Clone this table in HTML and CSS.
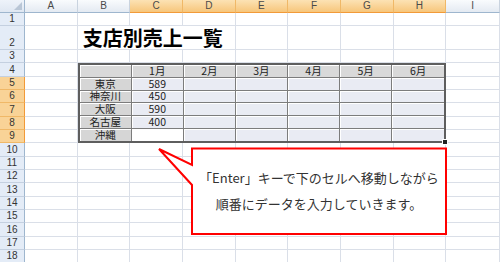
FILE: index.html
```html
<!DOCTYPE html>
<html lang="ja">
<head>
<meta charset="utf-8">
<title>支店別売上一覧</title>
<link rel="stylesheet" href="styles.css">
</head>
<body>
<div class="app">
  <div class="sheet">
    <div class="corner"></div>
    <div class="ch">A</div><div class="ch">B</div><div class="ch sel">C</div><div class="ch sel">D</div><div class="ch sel">E</div><div class="ch sel">F</div><div class="ch sel">G</div><div class="ch sel">H</div><div class="ch">I</div>

    <div class="rh">1</div><div class="c"></div><div class="c"></div><div class="c"></div><div class="c"></div><div class="c"></div><div class="c"></div><div class="c"></div><div class="c"></div><div class="c"></div>

    <div class="rh">2</div><div class="c"></div><div class="c title-cell"><span class="title">支店別売上一覧</span></div><div class="c"></div><div class="c"></div><div class="c"></div><div class="c"></div><div class="c"></div>

    <div class="rh">3</div><div class="c"></div><div class="c"></div><div class="c"></div><div class="c"></div><div class="c"></div><div class="c"></div><div class="c"></div><div class="c"></div><div class="c"></div>

    <div class="rh">4</div><div class="c"></div><div class="c"></div>
    <div class="rh sel">5</div><div class="c"></div><div class="c"></div>
    <div class="rh sel">6</div><div class="c"></div><div class="c"></div>
    <div class="rh sel">7</div><div class="c"></div><div class="c"></div>
    <div class="rh sel">8</div><div class="c"></div><div class="c"></div>
    <div class="rh sel">9</div><div class="c"></div><div class="c"></div>

    <div class="table">
      <div class="tc th"></div><div class="tc th">1月</div><div class="tc th">2月</div><div class="tc th">3月</div><div class="tc th">4月</div><div class="tc th">5月</div><div class="tc th last">6月</div>
      <div class="tc tn">東京</div><div class="tc td">589</div><div class="tc td"></div><div class="tc td"></div><div class="tc td"></div><div class="tc td"></div><div class="tc td last"></div>
      <div class="tc tn">神奈川</div><div class="tc td">450</div><div class="tc td"></div><div class="tc td"></div><div class="tc td"></div><div class="tc td"></div><div class="tc td last"></div>
      <div class="tc tn">大阪</div><div class="tc td">590</div><div class="tc td"></div><div class="tc td"></div><div class="tc td"></div><div class="tc td"></div><div class="tc td last"></div>
      <div class="tc tn">名古屋</div><div class="tc td">400</div><div class="tc td"></div><div class="tc td"></div><div class="tc td"></div><div class="tc td"></div><div class="tc td last"></div>
      <div class="tc tn bottom">沖縄</div><div class="tc td active bottom"></div><div class="tc td bottom"></div><div class="tc td bottom"></div><div class="tc td bottom"></div><div class="tc td bottom"></div><div class="tc td bottom last"></div>
      <div class="fill-handle"></div>
    </div>

    <div class="rh">10</div><div class="c"></div><div class="c"></div><div class="c"></div><div class="c"></div><div class="c"></div><div class="c"></div><div class="c"></div><div class="c"></div><div class="c"></div>
    <div class="rh">11</div><div class="c"></div><div class="c"></div><div class="c"></div><div class="c"></div><div class="c"></div><div class="c"></div><div class="c"></div><div class="c"></div><div class="c"></div>
    <div class="rh">12</div><div class="c"></div><div class="c"></div><div class="c"></div><div class="c"></div><div class="c"></div><div class="c"></div><div class="c"></div><div class="c"></div><div class="c"></div>
    <div class="rh">13</div><div class="c"></div><div class="c"></div><div class="c"></div><div class="c"></div><div class="c"></div><div class="c"></div><div class="c"></div><div class="c"></div><div class="c"></div>
    <div class="rh">14</div><div class="c"></div><div class="c"></div><div class="c"></div><div class="c"></div><div class="c"></div><div class="c"></div><div class="c"></div><div class="c"></div><div class="c"></div>
    <div class="rh">15</div><div class="c"></div><div class="c"></div><div class="c"></div><div class="c"></div><div class="c"></div><div class="c"></div><div class="c"></div><div class="c"></div><div class="c"></div>
    <div class="rh">16</div><div class="c"></div><div class="c"></div><div class="c"></div><div class="c"></div><div class="c"></div><div class="c"></div><div class="c"></div><div class="c"></div><div class="c"></div>
    <div class="rh">17</div><div class="c"></div><div class="c"></div><div class="c"></div><div class="c"></div><div class="c"></div><div class="c"></div><div class="c"></div><div class="c"></div><div class="c"></div>
    <div class="rh">18</div><div class="c"></div><div class="c"></div><div class="c"></div><div class="c"></div><div class="c"></div><div class="c"></div><div class="c"></div><div class="c"></div><div class="c"></div>
  </div>

  <svg class="callout" width="500" height="262" viewBox="0 0 500 262" aria-hidden="true">
    <path d="M192 148.5 H446 V234 H192 V185 L159 149 L192 165 Z" fill="#ffffff" stroke="#ff0000" stroke-width="2" stroke-linejoin="miter"/>
  </svg>
  <div class="callout-text">
    <p class="line">「Enter」キーで下のセルへ移動しながら</p>
    <p class="line">順番にデータを入力していきます。</p>
  </div>
</div>
</body>
</html>
```

FILE: styles.css
```css
html, body {
  margin: 0;
  padding: 0;
  background: #ffffff;
}

body {
  width: 500px;
  height: 262px;
  overflow: hidden;
  font-family: "Noto Sans CJK JP", "Liberation Sans", sans-serif;
}

.app {
  position: relative;
  width: 500px;
  height: 262px;
  overflow: hidden;
}

.sheet {
  display: grid;
  grid-template-columns: 25px repeat(8, 52.667px) 1fr;
  grid-template-rows: 13px 13.333px 23.667px repeat(16, 13.333px);
}

.corner {
  position: relative;
  background: linear-gradient(#eef3fa, #dfe7f2);
  border-right: 1px solid #9eb6ce;
  border-bottom: 1px solid #9eb6ce;
  box-sizing: border-box;
}

.corner::after {
  content: "";
  position: absolute;
  right: 2px;
  bottom: 2px;
  width: 0;
  height: 0;
  border-left: 8px solid transparent;
  border-bottom: 8px solid #b9c6d6;
}

.ch {
  box-sizing: border-box;
  background: linear-gradient(#f9fbfd, #e4eaf2);
  border-right: 1px solid #c9d3df;
  border-bottom: 1px solid #9eb6ce;
  font-family: "Liberation Sans", sans-serif;
  font-size: 10px;
  line-height: 12px;
  color: #4a4a4a;
  text-align: center;
}

.ch.sel {
  background: linear-gradient(#fce2b4, #f7c67b);
  border-right-color: #f0b867;
  border-bottom-color: #f29a38;
}

.rh {
  box-sizing: border-box;
  display: flex;
  align-items: flex-end;
  justify-content: center;
  background: #e4ecf7;
  border-right: 1px solid #9eb6ce;
  border-bottom: 1px solid #c4d0e0;
  font-family: "Liberation Sans", sans-serif;
  font-size: 10px;
  line-height: 12px;
  color: #333333;
}

.rh.sel {
  background: #f9d397;
  border-right-color: #f29a38;
  border-bottom-color: #f0b867;
}

.c {
  box-sizing: border-box;
  border-right: 1px solid #dadfe8;
  border-bottom: 1px solid #dadfe8;
  background: #ffffff;
}

.title-cell {
  grid-column: span 3;
  display: flex;
  align-items: flex-end;
  padding-left: 5px;
}

.title {
  font-family: "Noto Sans CJK JP", sans-serif;
  font-weight: 700;
  font-size: 20px;
  line-height: 22px;
  color: #000000;
  white-space: nowrap;
}

.table {
  position: relative;
  grid-column: 3 / 10;
  grid-row: 5 / 11;
  box-sizing: border-box;
  border: 2px solid #5e5e5e;
  display: grid;
  grid-template-columns: repeat(7, 1fr);
  grid-template-rows: repeat(6, 1fr);
  font-family: "Noto Sans CJK JP", sans-serif;
  font-size: 10.5px;
  color: #222222;
}

.tc {
  box-sizing: border-box;
  min-height: 0;
  border-right: 1px solid #7c7c7c;
  border-bottom: 1px solid #7c7c7c;
  box-shadow: inset 1px 1px 0 #ffffff;
  display: flex;
  align-items: center;
  justify-content: center;
  line-height: 10px;
  white-space: nowrap;
  overflow: visible;
}

.tc.last {
  border-right: none;
}

.tc.bottom {
  border-bottom: none;
}

.th {
  background: #d9d9d9;
}

.tn {
  background: #d6d6d6;
}

.td {
  background: #e9ebf3;
}

.td.active {
  background: #ffffff;
}

.fill-handle {
  position: absolute;
  right: -4px;
  bottom: -4px;
  width: 4px;
  height: 4px;
  background: #222222;
  border: 1px solid #ffffff;
}

.callout {
  position: absolute;
  left: 0;
  top: 0;
}

.callout-text {
  position: absolute;
  left: 192px;
  top: 148px;
  width: 254px;
  height: 86px;
  display: flex;
  flex-direction: column;
  align-items: center;
  justify-content: center;
  font-family: "Noto Sans CJK JP", sans-serif;
  font-size: 13px;
  color: #333333;
}

.line {
  margin: 0;
  line-height: 26px;
  white-space: nowrap;
}
```
